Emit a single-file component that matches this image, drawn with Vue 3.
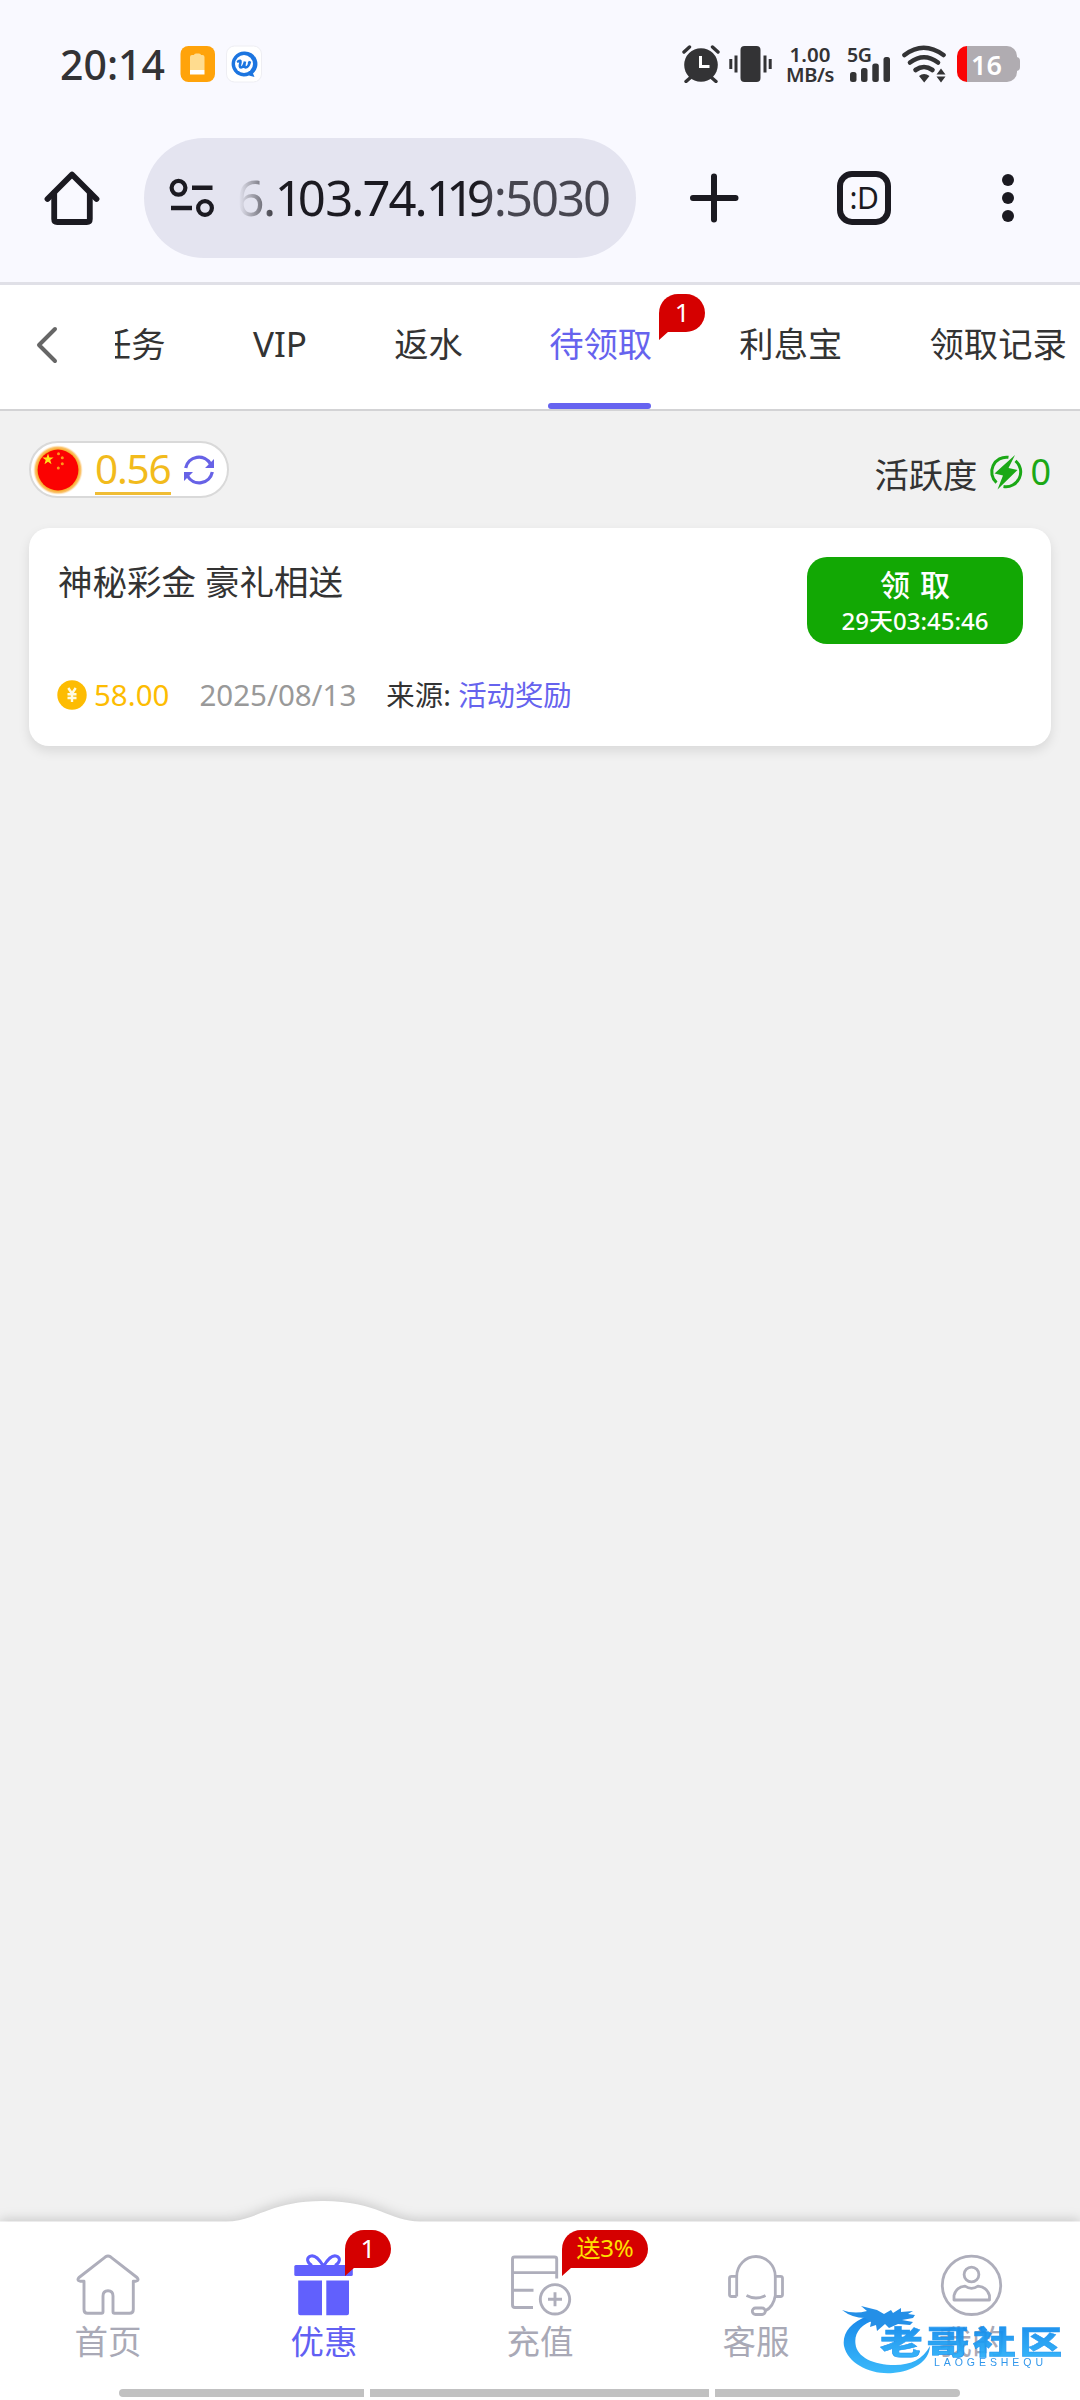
<script setup>
const tabs = [
  { label: '任务' },
  { label: 'VIP', latin: true },
  { label: '返水' },
  { label: '待领取', active: true, badge: '1' },
  { label: '利息宝' },
  { label: '领取记录' },
]
const urlRuns = [
  { t: '6.', s: -1.5 },
  { t: '1', s: -5 },
  { t: '0', s: -0.5 },
  { t: '3.74.', s: -2 },
  { t: '11', s: -7.5 },
  { t: '9', s: -1 },
  { t: ':503', s: -2 },
  { t: '0', s: 0 },
]
</script>

<template>
  <div class="screen">
    <header class="chrome">
      <div class="status">
        <span class="clock">20:14</span>
        <svg class="app1" width="36" height="38" viewBox="0 0 36 38">
          <rect x=".5" y="1" width="34.500" height="36" rx="8" fill="#ffa30a" />
          <path d="M10 12q0-2 2-2h2q0-1.500 2-1.500h3q2 0 2 1.500h1.500q2 0 2 2v13h-14.500z" fill="#ffdc8f" />
          <path d="M10 25h14.500v4.500h-14.500z" fill="#fff" />
        </svg>
        <svg class="app2" width="36" height="38" viewBox="0 0 36 38">
          <rect x=".5" y="1" width="35" height="36" rx="8" fill="#fff" stroke="#eeeef3" />
          <path d="M18 6.500a12.500 12.500 0 1 0 5 24l5.500 1.500-1.500-3.500a12.500 12.500 0 0 0-9-22z" fill="#1c75e0" />
          <circle cx="18" cy="19" r="9" fill="#fff" />
          <path d="M12 16.500q3-2 2.500 1-1.500 5 .5 5 2.500 0 4-6-1.500 6 .5 6 3 0 4.500-6l-1 1.500" fill="none" stroke="#1c75e0" stroke-width="2.600" stroke-linecap="round" />
        </svg>
        <div class="status-right">
          <svg width="38" height="38" viewBox="0 0 38 38" fill="#333335">
            <circle cx="19" cy="20" r="16.800" />
            <path d="M2 7l5.500-5M36 7l-5.500-5M8 33l-4 3.500M30 33l4 3.500" stroke="#333335" stroke-width="3.400" stroke-linecap="round" />
            <path d="M18.500 11v10.500h9" fill="none" stroke="#fff" stroke-width="3" />
          </svg>
          <svg class="vib" width="43" height="38" viewBox="0 0 43 38" fill="#333335">
            <rect x="11.500" y="1" width="20" height="36" rx="4" />
            <path d="M1.800 14v10M7 10.500v17M36 10.500v17M41.200 14v10" stroke="#333335" stroke-width="3" />
          </svg>
          <div class="speed"><span class="sp1">1.00</span><span class="sp2">MB/s</span></div>
          <div class="signal">
            <span class="net">5G</span>
            <svg width="41" height="38" viewBox="0 0 41 38" fill="#333335">
              <rect x="0" y="27" width="6.500" height="10" rx="2.500" />
              <rect x="11" y="23" width="6.500" height="14" rx="2.500" />
              <rect x="22.300" y="18.500" width="6.500" height="18.500" rx="2.500" />
              <rect x="33.500" y="12" width="6.500" height="25" rx="2.500" />
            </svg>
          </div>
          <svg class="wifi" width="45" height="38" viewBox="0 0 45 38">
            <g fill="none" stroke="#333335" stroke-width="4.600" stroke-linecap="round">
              <path d="M2.500 10q19-14.500 39 0" />
              <path d="M8 17.500q14-10.500 28 0" />
              <path d="M13.500 25q8.500-6 17 0" />
            </g>
            <path d="M17 31q5-4 10.500 0l-5.300 6.500zM34.500 29.500l4.500-6 4.500 6zM34.500 31.500h9l-4.500 6z" fill="#333335" />
          </svg>
          <div class="battery"><span>16</span></div>
        </div>
      </div>
      <div class="bar">
        <svg class="home" width="56" height="56" viewBox="0 0 56 56" fill="none" stroke="#1b1a21" stroke-width="5.800" stroke-linejoin="round" stroke-linecap="round">
          <path d="M3.500 29L28 4.500 52.500 29" />
          <path d="M10.200 23v26q0 3 3 3h29.600q3 0 3-3V23" />
        </svg>
        <div class="omni">
          <svg width="46" height="40" viewBox="0 0 46 40" fill="none" stroke="#1b1a21">
            <circle cx="9.500" cy="9.800" r="6.900" stroke-width="4.200" />
            <circle cx="36" cy="30" r="6.900" stroke-width="4.200" />
            <path d="M23 9.800h20.500M2 30h21" stroke-width="4.600" />
          </svg>
          <div class="url"><span v-for="(r, i) in urlRuns" :key="i" :style="{ letterSpacing: r.s + 'px' }">{{ r.t }}</span></div>
        </div>
        <svg class="plus" width="50" height="50" viewBox="0 0 50 50" stroke="#1b1a21" stroke-width="6" stroke-linecap="round"><path d="M25 3.500v43M4 25h42.500" /></svg>
        <div class="tabcount">:D</div>
        <svg class="more" width="14" height="50" viewBox="0 0 14 50" fill="#1b1a21"><circle cx="7" cy="7" r="6" /><circle cx="7" cy="25" r="6" /><circle cx="7" cy="43" r="6" /></svg>
      </div>
    </header>

    <nav class="tabs">
      <svg class="back" width="24" height="38" viewBox="0 0 24 38" fill="none" stroke="#666" stroke-width="4" stroke-linecap="round" stroke-linejoin="round"><path d="M20 3L4 19l16 16" /></svg>
      <div class="strip">
        <div v-for="t in tabs" :key="t.label" class="tab" :class="{ active: t.active, latin: t.latin }">
          {{ t.label }}
          <div v-if="t.badge" class="bubble tab-bubble">
            <svg width="14" height="18" viewBox="0 0 14 18"><path d="M0 0v18l9.500-8.500H14z" fill="#d50000" /></svg>
            <span>{{ t.badge }}</span>
          </div>
        </div>
      </div>
    </nav>

    <main class="main">
      <div class="topline">
        <div class="balance">
          <svg width="50" height="50" viewBox="0 0 50 50">
            <defs>
              <radialGradient id="glow"><stop offset=".82" stop-color="#f7a823" /><stop offset=".92" stop-color="#fbc470" /><stop offset="1" stop-color="#fff0d8" stop-opacity=".3" /></radialGradient>
            </defs>
            <circle cx="25" cy="25" r="24.800" fill="url(#glow)" />
            <circle cx="25" cy="25" r="20.400" fill="#fb0202" />
            <path d="M15 8.500l1.400 4h4.200l-3.400 2.600 1.300 4.200-3.500-2.500-3.500 2.500 1.200-4.200-3.300-2.600h4.200z" fill="#ffe31b" />
            <g fill="#ff9a1b"><circle cx="25.500" cy="8.800" r="1.500" /><circle cx="29.300" cy="12.800" r="1.500" /><circle cx="29.300" cy="18.800" r="1.500" /><circle cx="25.300" cy="23" r="1.500" /></g>
          </svg>
          <span class="amount">0.56</span>
          <svg width="32" height="32" viewBox="0 0 32 32">
            <g fill="none" stroke="#6762e6" stroke-width="3.300"><path d="M2.700 14A13.400 13.400 0 0 1 27.500 10" /><path d="M29.300 18A13.400 13.400 0 0 1 4.500 22" /></g>
            <path d="M31 5v9H22zM1 27v-9h9z" fill="#6762e6" />
          </svg>
        </div>
        <div class="activity">
          <span>活跃度</span>
          <svg width="34" height="36" viewBox="0 0 34 36">
            <g fill="none" stroke="#1ba816" stroke-width="3"><path d="M19.500 3.300A14.700 14.700 0 0 0 7.500 28.700" /><path d="M26.500 6.800A14.700 14.700 0 0 1 14.500 32.500" /></g>
            <path d="M26 1L5.500 19.500 14 21.500 8.500 35.500 28.500 16 19.500 14z" fill="#1ba816" />
          </svg>
          <b>0</b>
        </div>
      </div>

      <section class="card">
        <div class="card-top">
          <div class="title">神秘彩金 豪礼相送</div>
          <button class="claim"><span class="claim-t">领 取</span><span class="claim-c">29天03:45:46</span></button>
        </div>
        <div class="card-bottom">
          <svg width="30" height="30" viewBox="0 0 30 30"><circle cx="15" cy="15" r="14.700" fill="#fdbc02" /><path d="M11.300 8l3.700 5.500L18.700 8M10.500 14.300h9M10.500 18h9M15 14v8" fill="none" stroke="#fffbe2" stroke-width="2.400" /></svg>
          <span class="coin">58.00</span>
          <span class="date">2025/08/13</span>
          <span class="src">来源: <i>活动奖励</i></span>
        </div>
      </section>
    </main>

    <footer class="dock">
      <svg class="dock-bg" width="1080" height="229" viewBox="0 0 1080 229"><path d="M0 50.500H226C257 50.500 268 30 323 30S389 50.500 420 50.500H1080V229H0z" fill="#fff" /></svg>
      <div class="items">
        <div class="item">
          <svg width="64" height="64" viewBox="0 0 64 64" fill="none" stroke="#aeaebb" stroke-width="2.900" stroke-linejoin="round">
            <path d="M29.500 3.800Q32 2 34.500 3.800L61 24.500Q63.500 27.500 60 28.200H57.300V56.500Q57.300 60.300 53.500 60.300H38.500Q37 60.300 37 58.800V43Q37 37.700 32 37.700T27 43V58.800Q27 60.300 25.500 60.300H11.500Q8 60.300 8 56.500V28.200H4Q.5 27.500 3 24.500z" />
          </svg>
          <span>首页</span>
        </div>
        <div class="item on">
          <svg width="64" height="64" viewBox="0 0 64 64">
            <path d="M31 12.500C27 6 23 1.500 18.500 3.200S15 10 20 12.500M32 12.500C36 6 40 1.500 44.500 3.200S48 10 43 12.500" fill="none" stroke="#5f5fff" stroke-width="3" />
            <g fill="#6160fd"><rect x="2.300" y="12" width="58.500" height="11" rx="1.500" /><path d="M6.200 27.500H30V62.300H8.200q-2 0-2-2zM34.300 27.500H57v32.800q0 2-2 2H34.300z" /></g>
          </svg>
          <span>优惠</span>
          <div class="bubble dock-bubble"><svg width="14" height="18" viewBox="0 0 14 18"><path d="M0 0v18l9.500-8.500H14z" fill="#d50000" /></svg><span>1</span></div>
        </div>
        <div class="item">
          <svg width="64" height="64" viewBox="0 0 64 64" fill="none" stroke="#aeaebb" stroke-width="2.900" stroke-linejoin="round">
            <path d="M48.700 25.500V6q0-2-2-2H6.500q-2 0-2 2V52q0 2.500 2.500 2.500H25M4.500 19.600H48.700M4.500 37.200H25.500" />
            <circle cx="47" cy="46.300" r="14.700" /><path d="M40 46.300h14M47 39.300v14" />
          </svg>
          <span>充值</span>
          <div class="bubble dock-bubble wide"><svg width="14" height="18" viewBox="0 0 14 18"><path d="M0 0v18l9.500-8.500H14z" fill="#d50000" /></svg><span>送3%</span></div>
        </div>
        <div class="item">
          <svg width="64" height="64" viewBox="0 0 64 64" fill="none" stroke="#aeaebb" stroke-width="2.800">
            <path d="M12.700 43.500V23.500A19.300 20 0 0 1 51.300 23.500V42.500Q49.500 54 41 58" />
            <path d="M12.700 23.300H7.500q-2 0-2 2V41.500q0 2 2 2H12.700M51.300 23.300H56.500q2 0 2 2V41.500q0 2-2 2H51.300M22.500 42.500Q32 47.500 41.500 42.500" />
            <rect x="28.300" y="55" width="13" height="6.500" rx="3.200" />
          </svg>
          <span>客服</span>
        </div>
        <div class="item">
          <svg width="64" height="64" viewBox="0 0 64 64" fill="none" stroke="#aeaebb" stroke-width="2.800" stroke-linejoin="round">
            <circle cx="31.500" cy="32.300" r="29.200" /><circle cx="31.500" cy="21.500" r="7.400" />
            <path d="M14 47V42.500Q16 34 25 33.200Q31.500 37.500 38 33.200Q47 34 49.500 42.500V47z" />
          </svg>
          <span>我的</span>
        </div>
      </div>
      <div class="gesture"><i class="g1"></i><i class="g2"></i><i class="g3"></i></div>
      <svg class="mark" width="226" height="80" viewBox="0 0 226 80">
        <defs><linearGradient id="wm" x1="0" y1="0" x2="0" y2="1"><stop offset="0" stop-color="#087fe8" /><stop offset="1" stop-color="#2cb5fb" /></linearGradient></defs>
        <path d="M27 16C9 22 1 34 3 46C7 64 30 75 52 73C72 71 88 62 89 46C82 59 70 65 54 65C32 65 16 57 14.500 44C13 33 20 24 34 20z" fill="url(#wm)" />
        <path d="M1 10Q13 14.500 26 11L20 6 36 10 43 14 50 10 52 13 60 8 60 12 72 11 67 14 74 15 72 18 61 20 72 22 69 25 57 24 48 28 44 24 36 31 35 25 29 27 30 22 24 18Q11 18 1 10z" fill="#1487e6" />
        <g fill="url(#wm)" stroke="#1590f0" stroke-width=".6">
          <text class="wm-cn" transform="translate(39 54) scale(1.240 .93)" x="0" y="0">老哥社区</text>
        </g>
        <text class="wm-en" x="93" y="66" textLength="109">LAOGESHEQU</text>
      </svg>
    </footer>
  </div>
</template>

<style>
body { margin: 0; background: #f1f1f1; }
</style>

<style scoped>
* { box-sizing: border-box; }
.screen { width: 1080px; height: 2400px; overflow: hidden; display: flex; flex-direction: column; background: #f1f1f1; font-family: "Noto Sans", "Noto Sans CJK SC", sans-serif; color: #333; }
svg { display: block; flex: none; }
.chrome { height: 285px; background: #f9f9ff; border-bottom: 3px solid #e0e0e7; flex: none; }
.status { height: 138px; padding: 45px 59px 0 60px; display: flex; align-items: flex-start; }
.clock { font-size: 41px; font-weight: 500; line-height: 38px; letter-spacing: 0; width: 120px; color: #333335; white-space: nowrap; }
.app2 { margin-left: 10px; }
.status-right { margin-left: auto; display: flex; }
.vib { margin-left: 9px; }
.speed { margin-left: 11px; width: 54px; display: flex; flex-direction: column; align-items: center; font-weight: 600; color: #333335; }
.speed span { line-height: 19px; font-size: 20.500px; }
.speed .sp2 { font-size: 20px; letter-spacing: -.4px; line-height: 22px; }
.signal { position: relative; margin-left: 13px; width: 41px; }
.net { position: absolute; left: -3px; top: 0; font-size: 19.500px; line-height: 19px; font-weight: 600; color: #333335; letter-spacing: -.3px; }
.wifi { margin-left: 11px; }
.battery { position: relative; margin-left: 10px; margin-top: 1px; width: 60px; height: 36px; border-radius: 10px; background: linear-gradient(90deg, #fa0505 9.500px, #b0acb1 9.500px); margin-right: 4px; }
.battery::after { content: ""; position: absolute; right: -3px; top: 11px; width: 4px; height: 14px; border-radius: 0 4px 4px 0; background: #b0acb1; }
.battery span { display: block; padding-left: 14px; font-size: 27px; line-height: 38px; font-weight: 600; color: #fff; }
.bar { height: 120px; display: flex; align-items: center; padding-left: 44px; }
.omni { margin-left: 44px; width: 492px; height: 120px; border-radius: 60px; background: #e4e4f0; display: flex; align-items: center; padding-left: 25px; }
.url { margin-left: 24px; width: 372px; height: 60px; line-height: 59px; font-size: 49px; white-space: nowrap; overflow: hidden; display: flex; justify-content: flex-end; color: transparent; background: linear-gradient(90deg, rgba(27,26,33,0) 0, #1b1a21 42px, #1b1a21 240px, #474650 252px); background-clip: text; -webkit-background-clip: text; }
.plus { margin-left: 53px; }
.tabcount { margin-left: 98px; width: 54px; height: 54px; border: 6px solid #1b1a21; border-radius: 15px; font-size: 30px; line-height: 42px; text-align: center; color: #1b1a21; letter-spacing: -.5px; }
.more { margin-left: 110px; }
.tabs { height: 126px; background: #fff; border-bottom: 2px solid #d3d3d5; display: flex; flex: none; padding-left: 35px; }
.back { margin-top: 41px; }
.strip { position: relative; margin-left: 56px; flex: 1; display: flex; gap: 87.300px; overflow: hidden; }
.tab { position: relative; flex: none; height: 124px; line-height: 117px; font-size: 34.300px; white-space: nowrap; }
.tab:first-child { margin-left: -18px; }
.tab.latin { font-size: 35px; }
.tab.active { color: #6663ee; margin-left: -1px; }
.tab.active::after { content: ""; position: absolute; left: -1px; right: 1px; bottom: 0; height: 6px; border-radius: 3px; background: #6663f0; }
.bubble { position: absolute; height: 38px; min-width: 46px; border-radius: 19px 19px 19px 0; background: #d50000; color: #fff; font-size: 26px; line-height: 36px; text-align: center; }
.bubble svg { position: absolute; left: 0; top: 28px; }
.bubble span { position: relative; }
.tab-bubble { left: 110px; top: 9px; }
.main { flex: 1; }
.topline { display: flex; justify-content: space-between; padding: 30px 29px 0; height: 117px; }
.balance { width: 200px; height: 57px; border: 2px solid #d9d9d9; border-radius: 29px; background: #fff; display: flex; align-items: center; padding-left: 2px; }
.amount { margin: 0 12px 0 12px; width: 76px; height: 50px; margin-top: 0; line-height: 47px; font-size: 40.500px; letter-spacing: -1.200px; color: #f2bb1c; border-bottom: 3px solid #f0bd35; }
.activity { display: flex; align-items: center; height: 60px; margin-top: 4px; font-size: 34.300px; line-height: 60px; }
.activity svg { margin-left: 12px; margin-top: -6px; }
.activity b { font-weight: 400; font-size: 36px; margin-left: 7px; color: #1ba816; margin-top: -6px; }
.card { margin: 0 29px; height: 218px; border-radius: 20px; background: #fff; box-shadow: 0 5px 12px rgba(0, 0, 0, .1); padding: 29px 28px 0; }
.card-top { display: flex; justify-content: space-between; height: 123px; }
.title { font-size: 34.500px; line-height: 50px; padding-left: 1px; }
.claim { width: 216px; height: 87px; border: 0; border-radius: 20px; background: #12a804; color: #fff; padding: 0; display: flex; flex-direction: column; align-items: center; font-family: inherit; }
.claim-t { font-size: 30px; line-height: 40px; margin-top: 8px; font-weight: 500; word-spacing: 2px; }
.claim-c { font-size: 24px; line-height: 32px; font-weight: 500; letter-spacing: 0; }
.card-bottom { display: flex; align-items: center; height: 30px; font-size: 29.500px; line-height: 32px; white-space: nowrap; }
.coin { margin-left: 7px; color: #fdbc02; }
.date { margin-left: 30px; color: #999; }
.src { margin-left: 30px; font-size: 28.400px; }
.src i { font-style: normal; color: #6663ee; }
.dock { position: relative; height: 178px; flex: none; }
.dock-bg { position: absolute; left: 0; top: -51px; filter: drop-shadow(0 -2px 6px rgba(0, 0, 0, .17)); }
.items { position: relative; display: flex; height: 164px; }
.item { position: relative; width: 216px; display: flex; flex-direction: column; align-items: center; padding-top: 31px; font-size: 33.500px; color: #a9a9b6; }
.item span { line-height: 48px; }
.item > span { margin-top: 0; }
.item.on { color: #6160f3; }
.dock-bubble { left: 129px; top: 8px; }
.dock-bubble span { line-height: 36px; }
.dock-bubble.wide { left: 130px; width: 86px; color: #ffe000; font-size: 24px; letter-spacing: -.3px; }
.gesture { position: relative; display: flex; gap: 6px; margin: 3px 0 0 119px; height: 8px; }
.gesture i { background: #c1c1c1; height: 8px; }
.g1 { width: 245px; border-radius: 4px 0 0 4px; }
.g2 { width: 339px; }
.g3 { width: 245px; border-radius: 0 4px 4px 0; }
.mark { position: absolute; left: 841px; top: 78px; opacity: .93; filter: blur(.6px); }
.wm-cn { font-family: "Noto Sans CJK SC", sans-serif; font-weight: 900; font-size: 34.500px; letter-spacing: 3px; }
.wm-en { font-family: "Liberation Sans", sans-serif; font-size: 10.500px; fill: #2390ea; font-weight: 400; }
</style>
